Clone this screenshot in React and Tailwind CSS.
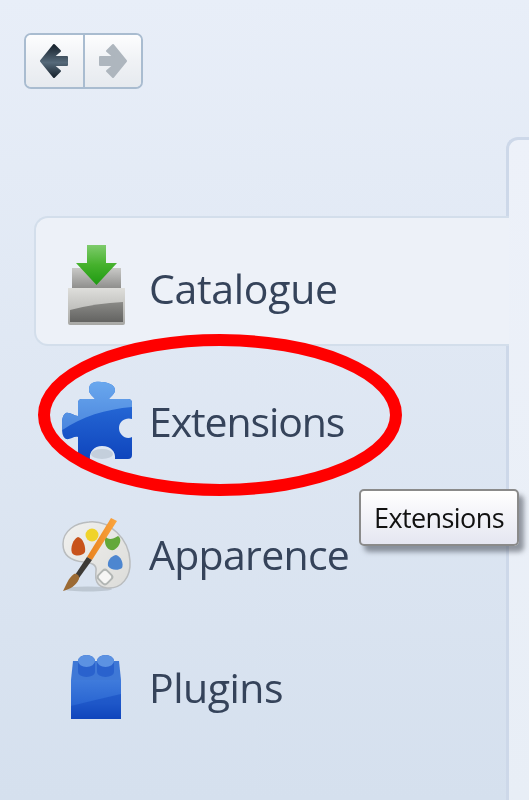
import React from 'react'

const BackArrow = () => (
  <svg width="30" height="38" viewBox="0 0 30 38" className="block">
    <defs>
      <linearGradient id="backFill" x1="0" y1="0" x2="0" y2="1">
        <stop offset="0" stopColor="#16212c" />
        <stop offset="0.55" stopColor="#566a7a" />
        <stop offset="1" stopColor="#18242f" />
      </linearGradient>
    </defs>
    <path d="M2 19 L15 3 L21 9 L14 15 L28 15 L28 23 L14 23 L21 29 L15 35 Z" fill="url(#backFill)" stroke="url(#backFill)" strokeWidth="2" strokeLinejoin="round" />
  </svg>
)

const ForwardArrow = () => (
  <svg width="30" height="38" viewBox="0 0 30 38" className="block">
    <path d="M28 19 L15 3 L9 9 L16 15 L2 15 L2 23 L16 23 L9 29 L15 35 Z" fill="#aeb6be" stroke="#aeb6be" strokeWidth="2" strokeLinejoin="round" />
  </svg>
)

const CatalogueIcon = () => (
  <svg width="60" height="82" viewBox="0 0 60 82" className="block">
    <defs>
      <linearGradient id="trayFront" x1="0" y1="0" x2="0" y2="1">
        <stop offset="0" stopColor="#dededb" />
        <stop offset="0.45" stopColor="#c6c6c3" />
        <stop offset="1" stopColor="#a8a8a5" />
      </linearGradient>
      <linearGradient id="trayBack" x1="0" y1="0" x2="0" y2="1">
        <stop offset="0" stopColor="#c9c9c7" />
        <stop offset="1" stopColor="#8f8f8d" />
      </linearGradient>
      <linearGradient id="trayBand" x1="0" y1="0" x2="0" y2="1">
        <stop offset="0" stopColor="#8a8a87" />
        <stop offset="1" stopColor="#636361" />
      </linearGradient>
      <linearGradient id="dlArrow" x1="0" y1="0" x2="0" y2="1">
        <stop offset="0" stopColor="#7ecb6c" />
        <stop offset="0.5" stopColor="#45b12c" />
        <stop offset="1" stopColor="#1f9a12" />
      </linearGradient>
    </defs>
    <path d="M5 24 L54 24 L54 44 L5 44 Z" fill="url(#trayBack)" />
    <path d="M1 44 L58 44 L58 79 Q58 81 56 81 L3 81 Q1 81 1 79 Z" fill="url(#trayFront)" />
    <path d="M3 78 L3 66 Q30 59 56 58 L56 78 Z" fill="url(#trayBand)" />
    <path d="M20 1 L39 1 L39 19 L50 19 L29.5 41 L9 19 L20 19 Z" fill="url(#dlArrow)" />
  </svg>
)

const PuzzleIcon = () => (
  <svg width="72" height="78" viewBox="0 0 72 78" className="block">
    <defs>
      <linearGradient id="puzzleFill" x1="0" y1="0" x2="0" y2="1">
        <stop offset="0" stopColor="#2f76df" />
        <stop offset="1" stopColor="#0f45bd" />
      </linearGradient>
      <linearGradient id="puzzleGloss" x1="0" y1="0" x2="0" y2="1">
        <stop offset="0" stopColor="#6aa8ee" />
        <stop offset="1" stopColor="#4a85dd" />
      </linearGradient>
      <clipPath id="puzzleClip">
        <path d="M34 1 C44 0 54 3 54 9 C54 13 50 15 48 18 L67 18 Q71 18 71 22 L71 38 C65 36 58 40 58 47 C58 54 65 59 71 56 L71 74 Q71 78 67 78 L54 78 C55 71 50 65 41 65 C33 65 28 71 29 78 L21 78 Q17 78 17 74 L17 56 C13 55 9 59 5 58 C1 56 1 50 1 45 C1 40 1 34 5 32 C9 31 13 35 17 35 L17 22 Q17 18 21 18 L34 18 C32 15 28 13 28 9 C28 4 30 2 34 1 Z" />
      </clipPath>
    </defs>
    <g clipPath="url(#puzzleClip)">
      <rect width="72" height="78" fill="url(#puzzleFill)" />
      <path d="M0 0 L72 0 L72 26 C45 28 20 36 0 50 Z" fill="url(#puzzleGloss)" />
    </g>
    <ellipse cx="41" cy="73" rx="11" ry="5" fill="#c4cfdc" />
  </svg>
)

const PaletteIcon = () => (
  <svg width="72" height="76" viewBox="0 0 72 76" className="block">
    <defs>
      <linearGradient id="brushFill" x1="0" y1="0" x2="1" y2="0">
        <stop offset="0" stopColor="#e8811c" />
        <stop offset="1" stopColor="#fba640" />
      </linearGradient>
      <linearGradient id="paletteFill" x1="0" y1="0" x2="1" y2="1">
        <stop offset="0" stopColor="#f1f1ef" />
        <stop offset="1" stopColor="#dcdcd9" />
      </linearGradient>
    </defs>
    <ellipse cx="26" cy="72" rx="24" ry="2.5" fill="#9aa4ae" opacity="0.45" />
    <path d="M27 5 C48 3 67 22 68 44 C69 60 60 72 45 71 C34 70 33 62 34 54 C35 47 29 46 22 45 C9 44 1 38 1 27 C1 14 13 6 27 5 Z" fill="url(#paletteFill)" stroke="#b9bcbe" strokeWidth="1.5" />
    <path d="M16 20 C21 21 24 30 23 35 C21 39 13 40 10 36 C8 31 11 22 16 20 Z" fill="#c8521a" />
    <ellipse cx="30" cy="18" rx="6.5" ry="6.5" fill="#f0d32a" />
    <path d="M43 19 C46 23 50 23 56 19 C60 21 59 29 52 33 C47 34 43 30 43 24 Z" fill="#63a83a" />
    <path d="M54 38 C59 39 62 47 60 51 C56 54 48 53 46 49 C45 44 49 39 54 38 Z" fill="#4d86d0" />
    <rect x="37" y="54" width="12" height="12" rx="3" transform="rotate(45 43 60)" fill="#f6f6f5" stroke="#b2b6b4" strokeWidth="2" />
    <path d="M49 1 L55 4 L30 43 L25 40 Z" fill="url(#brushFill)" />
    <path d="M25 40 L30 43 L17 61 L13 58 Z" fill="#3d3a36" />
    <path d="M12 57 C15 56 18 59 17 62 C14 69 8 72 1 74 C4 69 6 61 12 57 Z" fill="#9b6a34" />
  </svg>
)

const BrickIcon = () => (
  <svg width="52" height="66" viewBox="0 0 52 66" className="block">
    <defs>
      <linearGradient id="brickFront" x1="0" y1="0" x2="0" y2="1">
        <stop offset="0" stopColor="#3f7bdc" />
        <stop offset="0.6" stopColor="#2a66d2" />
        <stop offset="1" stopColor="#1145bc" />
      </linearGradient>
    </defs>
    <path d="M3 7 L49 7 L51 26 L1 26 Z" fill="#3f78d6" />
    <path d="M8 7 A8.500 6 0 0 1 25 7 L25 18 A8.500 5 0 0 1 8 18 Z" fill="#2a62cd" />
    <ellipse cx="16.500" cy="7" rx="8.500" ry="6" fill="#5c92e2" />
    <path d="M27 7 A8.500 6 0 0 1 44 7 L44 18 A8.500 5 0 0 1 27 18 Z" fill="#2a62cd" />
    <ellipse cx="35.500" cy="7" rx="8.500" ry="6" fill="#5c92e2" />
    <rect x="1" y="26" width="50" height="39" fill="url(#brickFront)" />
    <path d="M1 52 Q25 46 51 40 L51 65 L1 65 Z" fill="#0f44bd" opacity="0.45" />
  </svg>
)

const NavItem = ({ icon, label, selected, iconClass, labelClass }) => (
  <div
    className={
      selected
        ? 'relative z-10 -mr-[3px] mb-[9px] flex h-[130px] items-center rounded-l-[14px] border-2 border-r-0 border-[#d3deeb] bg-[#edf1f8] pt-[14px]'
        : 'flex h-[133px] items-center'
    }
  >
    <div className={selected ? 'flex w-[113px] shrink-0' : 'flex w-[115px] shrink-0'}>
      <div className={iconClass}>{icon}</div>
    </div>
    <span className={"font-['Open_Sans',sans-serif] text-[41px] leading-none text-[#35435a] " + labelClass}>{label}</span>
  </div>
)

export default function App() {
  return (
    <div className="relative flex h-[800px] w-[529px] overflow-hidden bg-gradient-to-b from-[#e8eef8] to-[#d5e0ee] blur-[0.7px]">
      <div className="flex w-[506px] shrink-0 flex-col">
        <div className="ml-[24px] mt-[33px] flex h-[56px] w-[119px] overflow-hidden rounded-[7px] border-2 border-[#a9bcd0]">
          <button className="flex flex-1 items-center justify-center border-r-2 border-[#a9bcd0] bg-gradient-to-b from-[#fdfdfe] via-[#f0f2f5] to-[#e6eaef]">
            <BackArrow />
          </button>
          <button className="flex flex-1 items-center justify-center bg-gradient-to-b from-[#fdfdfe] via-[#f0f2f5] to-[#e6eaef]">
            <ForwardArrow />
          </button>
        </div>
        <nav className="ml-[34px] mt-[127px] flex flex-col">
          <NavItem selected label="Catalogue" iconClass="ml-[31px] mb-[6px]" labelClass="tracking-[-0.3px]" icon={<CatalogueIcon />} />
          <NavItem label="Extensions" iconClass="ml-[27px] mb-[4px]" labelClass="tracking-[-1.1px]" icon={<PuzzleIcon />} />
          <NavItem label="Apparence" iconClass="ml-[28px]" labelClass="tracking-[-0.7px]" icon={<PaletteIcon />} />
          <NavItem label="Plugins" iconClass="ml-[36px] mb-[2px]" labelClass="tracking-[-0.5px]" icon={<BrickIcon />} />
        </nav>
      </div>
      <div className="mt-[137px] flex-1 rounded-tl-[12px] border-l-[3px] border-t-[3px] border-[#cdd8e9] bg-gradient-to-b from-[#edf1f9] to-[#e8eef6]" />

      <svg width="529" height="800" viewBox="0 0 529 800" className="pointer-events-none absolute left-0 top-0 z-20">
        <ellipse cx="220" cy="415" rx="176" ry="75" fill="none" stroke="#ff0000" strokeWidth="12" />
      </svg>

      <div className="absolute left-[359px] top-[489px] z-30 flex h-[57px] w-[160px] items-center justify-center rounded-[5px] border-2 border-[#8a8a8a] bg-gradient-to-b from-[#ffffff] to-[#e5e6f1] shadow-[5px_6px_5px_rgba(70,75,85,0.55)]">
        <span className="font-['Open_Sans',sans-serif] text-[27px] leading-none tracking-[-0.6px] text-[#111111]">Extensions</span>
      </div>
    </div>
  )
}
